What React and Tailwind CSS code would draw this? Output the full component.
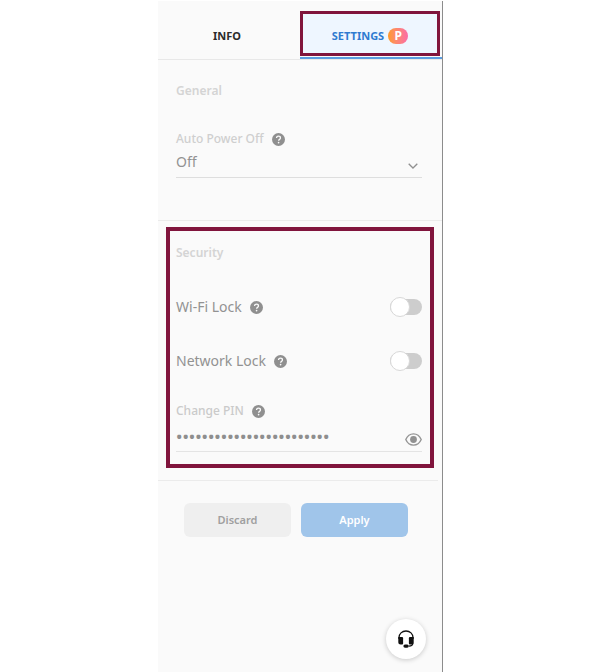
import React, { useState } from "react";

const HelpIcon = () => (
  <svg viewBox="0 0 14 14" className="w-[13px] h-[13px]" aria-hidden="true">
    <circle cx="7" cy="7" r="7" fill="#8f8f8f" />
    <path
      d="M4.9 5.5c0-1.3.9-2.1 2.1-2.1s2.1.8 2.1 1.9c0 1.5-2 1.6-2 3"
      fill="none"
      stroke="#fafafa"
      strokeWidth="1.4"
    />
    <circle cx="7.1" cy="10.3" r="0.9" fill="#fafafa" />
  </svg>
);

const HelpButton = ({ label }) => (
  <button type="button" aria-label={label} className="shrink-0">
    <HelpIcon />
  </button>
);

const PremiumBadge = () => (
  <span className="flex h-4 w-5 items-center justify-center rounded-full bg-gradient-to-r from-[#ff9a1f] to-[#fb6ba5] text-xs leading-4 font-bold text-white">
    P
  </span>
);

const ChevronIcon = () => (
  <svg viewBox="0 0 10 6" className="pointer-events-none absolute right-1 bottom-2 h-[6px] w-[10px]">
    <path d="M0.7 0.7L5 5L9.3 0.7" fill="none" stroke="#909090" strokeWidth="1.3" />
  </svg>
);

const EyeIcon = () => (
  <svg viewBox="0 0 17 13" className="h-[13px] w-[17px]">
    <path
      d="M0.8 6.5C2.3 3 5.1 0.9 8.5 0.9s6.2 2.1 7.7 5.6c-1.5 3.5-4.3 5.6-7.7 5.6S2.3 10 0.8 6.5z"
      fill="none"
      stroke="#959595"
      strokeWidth="1.4"
    />
    <circle cx="8.5" cy="6.5" r="3.4" fill="#919191" />
  </svg>
);

const HeadsetIcon = () => (
  <svg viewBox="0 0 16 18" className="h-[18px] w-4">
    <path d="M1 9V7.6C1 3.8 4 1 8 1s7 2.8 7 6.6V9" fill="none" stroke="#111" strokeWidth="1.3" />
    <path d="M0.3 7h3.5c.8 0 1.3.5 1.3 1.3v5c0 .8-.5 1.3-1.3 1.3H2.6c-1.3 0-2.3-1-2.3-2.3z" fill="#111" />
    <path d="M15.7 7h-3.5c-.8 0-1.3.5-1.3 1.3v5c0 .8.5 1.3 1.3 1.3h1.2c1.3 0 2.3-1 2.3-2.3z" fill="#111" />
    <path d="M14.9 12.8c0 2.2-1.5 3.3-4 3.3" fill="none" stroke="#111" strokeWidth="1.2" />
    <rect x="5.4" y="14.4" width="5.4" height="3.3" rx="1.6" fill="#111" />
  </svg>
);

const ToggleRow = ({ id, label }) => {
  const [on, setOn] = useState(false);

  return (
    <div className="flex h-5 items-center">
      <label htmlFor={id} className="mr-2 text-sm leading-5 text-[#929292]">
        {label}
      </label>
      <HelpButton label={`About ${label}`} />
      <input
        id={id}
        type="checkbox"
        role="switch"
        checked={on}
        onChange={() => setOn(!on)}
        className="ml-auto flex h-4 w-8 appearance-none items-center rounded-full bg-[#cdcdcd] before:size-5 before:shrink-0 before:rounded-full before:border before:border-[#d8d8d8] before:bg-white checked:bg-[#3b82d0] checked:justify-end"
      />
    </div>
  );
};

const App = () => {
  const [tab, setTab] = useState("settings");

  return (
    <div className="min-h-screen bg-white pt-px pl-px font-['Noto_Sans',sans-serif]">
      <main className="mx-auto flex min-h-[calc(100vh-1px)] w-full max-w-[285px] flex-col border-r border-[#8c8c8c] bg-[#fafafa]">
        <nav className="grid grid-cols-2 border-b border-[#e8e8e8] text-[11px] leading-4 font-bold">
          <button
            type="button"
            onClick={() => setTab("info")}
            className="mt-3 flex h-[46px] items-center justify-center pr-1 text-[#2b2b2b]"
          >
            INFO
          </button>
          <button
            type="button"
            aria-current={tab === "settings"}
            onClick={() => setTab("settings")}
            className="mt-[10px] flex h-[48px] border-b-2 border-[#5a9ce0]"
          >
            <span className="mr-[2px] mb-px flex h-[45px] grow items-center justify-center gap-1 border-[3px] border-[#80143c] bg-[#eef6ff] pt-1 text-[#2f7bd0]">
              SETTINGS <PremiumBadge />
            </span>
          </button>
        </nav>

        <section className="border-b border-[#ebebeb] pt-[23px] pr-5 pb-[42px] pl-[18px]">
          <h2 className="text-xs leading-4 font-semibold text-[#d4d4d4]">General</h2>
          <div className="mt-8 flex h-4 items-center">
            <label htmlFor="power" className="mr-2 text-xs leading-4 font-medium text-[#cfcfcf]">
              Auto Power Off
            </label>
            <HelpButton label="About Auto Power Off" />
          </div>
          <div className="relative border-b border-[#dedede] pt-[5px] pb-[5px]">
            <select
              id="power"
              className="block w-full appearance-none text-sm leading-5 text-[#929292]"
            >
              <option>Off</option>
              <option>30 min</option>
              <option>1 hour</option>
            </select>
            <ChevronIcon />
          </div>
        </section>

        <section className="mr-1 border-b border-[#ebebeb] pt-[6px] pr-1 pb-3 pl-2">
          <div className="border-4 border-[#80143c] pt-[14px] pr-2 pb-3 pl-[6px]">
            <h2 className="text-xs leading-4 font-semibold text-[#d4d4d4]">Security</h2>
            <div className="mt-9 flex flex-col gap-[34px]">
              <ToggleRow id="wifi" label="Wi-Fi Lock" />
              <ToggleRow id="network" label="Network Lock" />
            </div>
            <div className="mt-8 flex h-4 items-center">
              <label htmlFor="pin" className="mr-2 text-xs leading-4 font-medium text-[#cacaca]">
                Change PIN
              </label>
              <HelpButton label="About Change PIN" />
            </div>
            <div className="flex items-center border-b border-[#e4e4e4] pt-2 pb-1">
              <input
                id="pin"
                type="password"
                defaultValue="123456789012345678901234"
                className="h-5 min-w-0 grow text-[17px] leading-5 font-medium text-[#8e8e8e] outline-none"
              />
              <button type="button" aria-label="Show PIN" className="mt-1">
                <EyeIcon />
              </button>
            </div>
          </div>
        </section>

        <div className="grid grid-cols-2 gap-[10px] pt-[22px] pr-[34px] pl-[26px] text-[11px] leading-4 font-semibold">
          <button type="button" className="h-[34px] rounded-md bg-[#efefef] text-[#a0a0a0]">
            Discard
          </button>
          <button type="button" className="h-[34px] rounded-md bg-[#a0c5ea] text-white">
            Apply
          </button>
        </div>

        <button
          type="button"
          aria-label="Contact support"
          className="mt-auto mr-4 mb-[13px] flex size-10 items-center justify-center self-end rounded-full bg-white shadow-[0_1px_5px_rgba(0,0,0,0.2)]"
        >
          <HeadsetIcon />
        </button>
      </main>
    </div>
  );
};

export default App;
